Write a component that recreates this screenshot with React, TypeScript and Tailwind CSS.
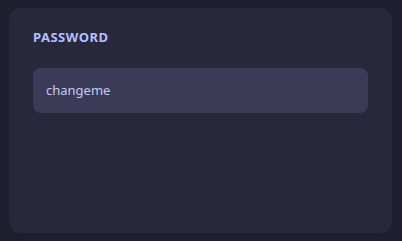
export default function App() {
  return (
    <div className="w-[402px] h-[241px] bg-[#1e1e2f] pt-[8px] pl-[9px] font-['Noto_Sans',sans-serif]">
      <div className="w-[383px] h-[225px] rounded-xl bg-[#28283d] px-6 pt-[19px]">
        <div className="text-[13px] font-bold uppercase tracking-[0.5px] leading-[20px] text-[#b4befe]">
          Password
        </div>
        <div className="mt-[21px] h-[45px] rounded-lg bg-[#3b3b57] px-[13px] pb-[2px] flex items-center text-[13px] leading-[20px] text-[#c3caf6]">
          changeme
        </div>
      </div>
    </div>
  );
}
